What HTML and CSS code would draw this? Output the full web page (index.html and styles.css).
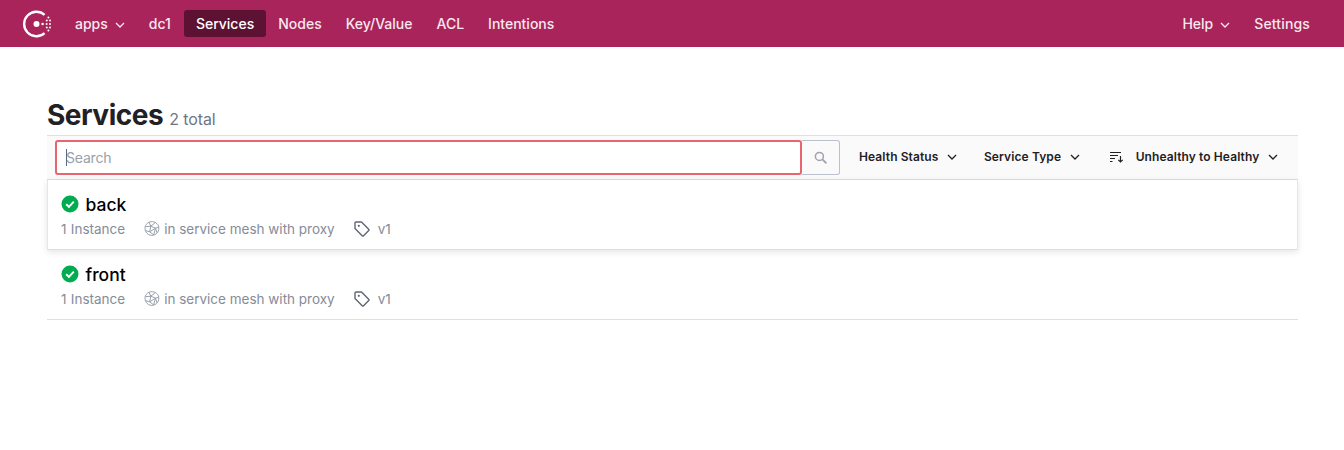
FILE: index.html
```html
<!DOCTYPE html>
<html lang="en">
<head>
    <meta charset="UTF-8">
    <title>Services - Consul</title>
    <link rel="stylesheet" href="styles.css">
</head>
<body>

    <!-- Header -->
    <header class="topbar">
        <a class="logo" href="#">
            <svg width="30" height="30" viewBox="0 0 30 30">
                <path d="M22.6 5.800A12.300 12.300 0 1 0 22.600 24.200" fill="none" stroke="#fff" stroke-width="2.400"/>
                <circle cx="14.500" cy="15" r="3" fill="#fff"/>
                <circle cx="20.600" cy="15" r="1.200" fill="#fff"/>
                <circle cx="24.600" cy="15" r="1" fill="#fff"/>
                <circle cx="28" cy="15" r="1" fill="#fff"/>
                <circle cx="24.800" cy="11.600" r="1" fill="#fff"/>
                <circle cx="28" cy="11.600" r="1" fill="#fff"/>
                <circle cx="24.800" cy="18.400" r="1" fill="#fff"/>
                <circle cx="28" cy="18.400" r="1" fill="#fff"/>
                <circle cx="26.400" cy="8.400" r="1" fill="#fff"/>
                <circle cx="26.400" cy="21.600" r="1" fill="#fff"/>
            </svg>
        </a>
        <nav class="nav-main">
            <a class="nav-link" href="#">apps <svg class="caret" width="10" height="6" viewBox="0 0 10 6"><path d="M1 1l4 4 4-4" fill="none" stroke="currentColor" stroke-width="1.300"/></svg></a>
            <a class="nav-link" href="#">dc1</a>
            <a class="nav-link active" href="#">Services</a>
            <a class="nav-link" href="#">Nodes</a>
            <a class="nav-link" href="#">Key/Value</a>
            <a class="nav-link" href="#">ACL</a>
            <a class="nav-link" href="#">Intentions</a>
        </nav>
        <nav class="nav-side">
            <a class="nav-link" href="#">Help <svg class="caret" width="10" height="6" viewBox="0 0 10 6"><path d="M1 1l4 4 4-4" fill="none" stroke="currentColor" stroke-width="1.300"/></svg></a>
            <a class="nav-link nav-settings" href="#">Settings</a>
        </nav>
    </header>

    <!-- Main Content -->
    <main class="content">
        <h1 class="page-title">Services <small>2 total</small></h1>

        <div class="toolbar">
            <div class="search">
                <input class="search-input" type="text" placeholder="Search">
                <span class="text-caret"></span>
                <button class="search-btn" type="button">
                    <svg width="14" height="14" viewBox="0 0 14 14"><circle cx="5.400" cy="5.400" r="4" fill="none" stroke="#9ea3ab" stroke-width="1.500"/><path d="M8.400 8.400l4 4" stroke="#9ea3ab" stroke-width="1.800"/></svg>
                </button>
            </div>
            <div class="filters">
                <button class="filter" type="button">Health Status <svg width="10" height="6" viewBox="0 0 10 6"><path d="M1 1l4 4 4-4" fill="none" stroke="#1f2124" stroke-width="1.300"/></svg></button>
                <button class="filter" type="button">Service Type <svg width="10" height="6" viewBox="0 0 10 6"><path d="M1 1l4 4 4-4" fill="none" stroke="#1f2124" stroke-width="1.300"/></svg></button>
                <button class="filter filter-sort" type="button">
                    <svg class="sort-icon" width="14" height="12" viewBox="0 0 14 12"><path d="M0 1.500h11M0 4.500h8M0 7.500h5M0 10.500h2.500" stroke="#1f2124" stroke-width="1.200" fill="none"/><path d="M10.500 5v6M8.300 8.800l2.200 2.200 2.200-2.200" stroke="#1f2124" stroke-width="1.200" fill="none"/></svg>
                    Unhealthy to Healthy <svg width="10" height="6" viewBox="0 0 10 6"><path d="M1 1l4 4 4-4" fill="none" stroke="#1f2124" stroke-width="1.300"/></svg>
                </button>
            </div>
        </div>

        <ul class="service-list">
            <li class="service hovered">
                <div class="service-name">
                    <svg width="18" height="18" viewBox="0 0 18 18"><circle cx="9" cy="9" r="8.500" fill="#00ac4f"/><path d="M5.200 9.200l2.700 2.600 4.900-5.200" fill="none" stroke="#fff" stroke-width="1.900"/></svg>
                    <a href="#">back</a>
                </div>
                <div class="service-meta">
                    <span class="instances">1 Instance</span>
                    <span class="meta-item">
                        <svg width="16" height="16" viewBox="0 0 16 16"><g fill="none" stroke="#9aa1ac" stroke-width="1"><path d="M5 1.200C7 .4 10 .5 11.500 1.500c2 1.200 3.200 3 3.300 5 .2 2.500-.6 4.800-2.500 6.300-1.700 1.300-4.500 2-6.500 1.300-2.200-.7-4-2.700-4.500-4.800-.5-2.300-.4-4 .7-5.600C3 2.600 4 1.700 5 1.200z"/><path d="M5 1.200l1.800 4-5.300.5M11.500 1.500L6.800 5.200l4.700 2 3.300-1M6.800 5.200L5.700 10.800l4 3.100M11.500 7.200l1.500 4.700M11.500 7.200L9.700 13.900M5.700 10.800l-4.200-1.200M5.700 10.800l5.800-3.600"/></g></svg>
                        in service mesh with proxy
                    </span>
                    <span class="meta-item meta-tag">
                        <svg width="16" height="16" viewBox="0 0 16 16"><path d="M1 2.200c0-.7.500-1.200 1.200-1.200h5.300l7.200 7.200c.4.400.4 1 0 1.400l-5.100 5.100c-.4.400-1 .4-1.400 0L1 7.500z" fill="none" stroke="#5f6672" stroke-width="1.400" stroke-linejoin="round"/><circle cx="4.800" cy="4.800" r="1.100" fill="#5f6672"/></svg>
                        v1
                    </span>
                </div>
            </li>
            <li class="service">
                <div class="service-name">
                    <svg width="18" height="18" viewBox="0 0 18 18"><circle cx="9" cy="9" r="8.500" fill="#00ac4f"/><path d="M5.200 9.200l2.700 2.600 4.900-5.200" fill="none" stroke="#fff" stroke-width="1.900"/></svg>
                    <a href="#">front</a>
                </div>
                <div class="service-meta">
                    <span class="instances">1 Instance</span>
                    <span class="meta-item">
                        <svg width="16" height="16" viewBox="0 0 16 16"><g fill="none" stroke="#9aa1ac" stroke-width="1"><path d="M5 1.200C7 .4 10 .5 11.500 1.500c2 1.200 3.200 3 3.300 5 .2 2.500-.6 4.800-2.500 6.300-1.700 1.300-4.500 2-6.500 1.300-2.200-.7-4-2.700-4.500-4.800-.5-2.300-.4-4 .7-5.600C3 2.600 4 1.700 5 1.200z"/><path d="M5 1.200l1.800 4-5.300.5M11.500 1.500L6.800 5.200l4.700 2 3.300-1M6.800 5.200L5.700 10.800l4 3.100M11.500 7.200l1.500 4.700M11.500 7.200L9.700 13.900M5.700 10.800l-4.200-1.200M5.700 10.800l5.800-3.600"/></g></svg>
                        in service mesh with proxy
                    </span>
                    <span class="meta-item meta-tag">
                        <svg width="16" height="16" viewBox="0 0 16 16"><path d="M1 2.200c0-.7.500-1.200 1.200-1.200h5.300l7.200 7.200c.4.400.4 1 0 1.400l-5.100 5.100c-.4.400-1 .4-1.400 0L1 7.500z" fill="none" stroke="#5f6672" stroke-width="1.400" stroke-linejoin="round"/><circle cx="4.800" cy="4.800" r="1.100" fill="#5f6672"/></svg>
                        v1
                    </span>
                </div>
            </li>
        </ul>
    </main>

</body>
</html>
```

FILE: styles.css
```css
/* Base */
body {
    margin: 0;
    font-family: 'Inter', sans-serif;
    background-color: #fff;
    color: #1f2124;
}

a {
    text-decoration: none;
    color: inherit;
}

/* Header */
.topbar {
    display: flex;
    align-items: center;
    height: 47px;
    padding: 0 22px;
    background-color: #a9245a;
    color: #fff;
}

.logo {
    display: flex;
    width: 30px;
    margin-right: 11px;
}

.nav-main {
    display: flex;
    align-items: center;
}

.nav-side {
    display: flex;
    align-items: center;
    margin-left: auto;
}

.nav-link {
    display: flex;
    align-items: center;
    height: 27px;
    padding: 0 12px;
    border-radius: 3px;
    font-size: 14px;
    font-weight: 500;
    color: #f8e8ef;
}

.nav-link.active {
    margin-left: 1px;
    background-color: #5d1233;
    color: #fff;
}

.nav-settings {
    letter-spacing: 0.15px;
}

.caret {
    margin-left: 7px;
    margin-top: 2px;
}

/* Main */
.content {
    padding: 51px 46px 0 47px;
}

.page-title {
    margin: 0;
    height: 37px;
    font-size: 28px;
    line-height: 35px;
    font-weight: 700;
    letter-spacing: -0.5px;
    color: #1f2124;
}

.page-title small {
    font-size: 16px;
    font-weight: 400;
    letter-spacing: -0.1px;
    color: #6f7682;
}

/* Toolbar */
.toolbar {
    display: flex;
    align-items: center;
    height: 43px;
    padding-left: 8px;
    border-top: 1px solid #dce0e6;
    border-bottom: 1px solid #dce0e6;
    background-color: #fafafa;
}

.search {
    position: relative;
    display: flex;
    width: 785px;
    height: 35px;
}

.search-input {
    flex: 1;
    min-width: 0;
    box-sizing: border-box;
    height: 35px;
    padding: 0 9px;
    border: 2px solid #e8656f;
    border-radius: 3px;
    background-color: #fff;
    font-family: inherit;
    font-size: 14px;
    letter-spacing: -0.2px;
    outline: none;
}

.search-input::placeholder {
    color: #98a0ac;
}

/* caret of the focused field */
.text-caret {
    position: absolute;
    left: 11px;
    top: 9px;
    width: 1px;
    height: 17px;
    background-color: #5a6a85;
}

.search-btn {
    display: flex;
    align-items: center;
    justify-content: center;
    width: 38px;
    height: 35px;
    padding: 0;
    border: 1px solid #bac1cc;
    border-left: none;
    border-radius: 0 3px 3px 0;
    background-color: #fafafa;
}

.filters {
    display: flex;
    align-items: center;
    flex: 1;
    padding-left: 19px;
    padding-bottom: 2px;
}

.filter {
    display: flex;
    align-items: center;
    gap: 9px;
    margin-right: 26.5px;
    padding: 0;
    border: none;
    background: none;
    font-family: inherit;
    font-size: 12px;
    font-weight: 600;
    letter-spacing: 0.1px;
    color: #1f2124;
    white-space: nowrap;
}

.filter-sort {
    margin-left: 3px;
    margin-right: 0;
}

.sort-icon {
    margin-right: 3px;
}

/* Service list */
.service-list {
    margin: 0;
    padding: 0;
    list-style: none;
}

.service {
    box-sizing: border-box;
    height: 70px;
    padding: 13px 13px 0 14px;
    border-bottom: 1px solid #dce0e6;
}

.service.hovered {
    border-left: 1px solid #e3e6ea;
    border-right: 1px solid #e3e6ea;
    padding-left: 13px;
    box-shadow: 0 2px 6px rgba(31, 33, 36, 0.12);
}

.service-name {
    display: flex;
    align-items: center;
    gap: 6.5px;
    height: 22px;
    font-size: 17.5px;
    font-weight: 500;
    color: #000;
}

.service-meta {
    display: flex;
    align-items: center;
    margin-top: 4px;
    height: 20px;
    font-size: 13.5px;
    color: #858c98;
}

.instances {
    word-spacing: 0.5px;
}

.meta-item {
    display: flex;
    align-items: center;
    gap: 4px;
    margin-left: 19px;
}

.meta-tag {
    gap: 8px;
}
```
